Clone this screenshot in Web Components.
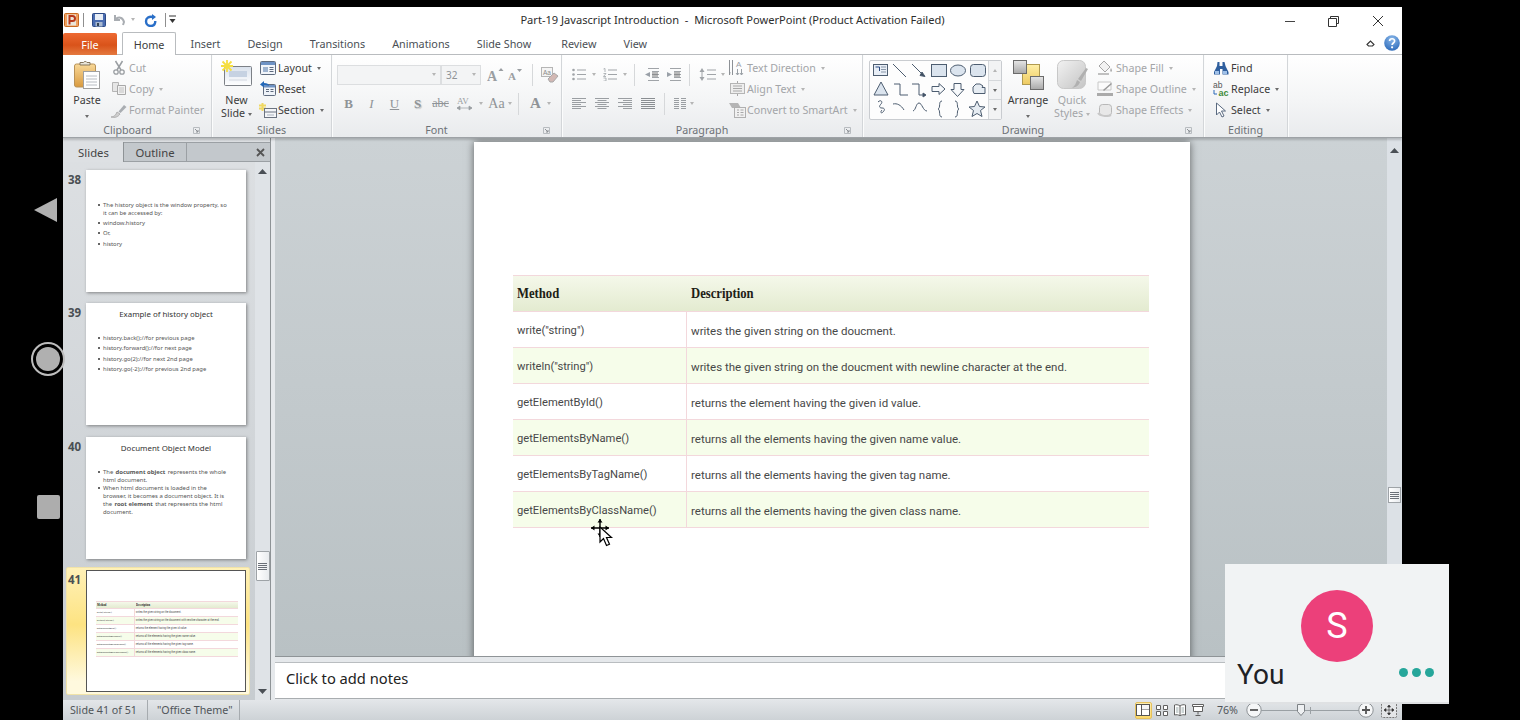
<!DOCTYPE html>
<html>
<head>
<meta charset="utf-8">
<title>PowerPoint</title>
<style>
  html, body { margin: 0; padding: 0; background: #000; height: 720px; overflow: hidden; }
</style>
</head>
<body>
<ppt-app></ppt-app>
<script>
const s = (w, h, inner) => `<svg xmlns="http://www.w3.org/2000/svg" width="${w}" height="${h}" viewBox="0 0 ${w} ${h}">${inner}</svg>`;
const grey = '#9a9ea2';
const ICONS = {
  ppt: s(15, 14, `<rect x=".5" y=".5" width="14" height="13" rx="1" fill="#f0a060" stroke="#c8691f"/><rect x="3" y="1.5" width="9" height="11" fill="#e9e4d8"/><path d="M5.5 11.5V3h3a2.4 2.4 0 0 1 0 5h-3" fill="none" stroke="#b8381a" stroke-width="2"/>`),
  save: s(14, 14, `<rect x=".5" y=".5" width="13" height="13" rx="1" fill="#4a6cb0" stroke="#2c4a86"/><rect x="3" y="1" width="8" height="6" fill="#e8eef6"/><rect x="3.5" y="9" width="7" height="4.5" fill="#a8b8d0"/><rect x="5" y="10" width="2" height="3" fill="#345"/>`),
  undo: s(13, 13, `<path d="M2 2v5h5M2.5 6.5C5 3.5 10 4 11 9l-1 3" fill="none" stroke="#a9adb2" stroke-width="2"/>`),
  redo: s(13, 14, `<path d="M8 1l4 3-4 3z" fill="#2a6fc8"/><path d="M9 4C5 3 2 5 2 8.200 2 11 4.200 13 6.800 13 9.600 13 11.300 11 11.300 8" fill="none" stroke="#2a6fc8" stroke-width="2.400"/>`),
  customize: s(7, 9, `<path d="M0 1h7" stroke="#333"/><path d="M.5 4h6L3.5 8z" fill="#333"/>`),
  min: s(15, 3, `<path d="M1 1.5h10" stroke="#444" stroke-width="1"/>`),
  restore: s(11, 11, `<path d="M2.5 2.5V.5h8v7H8.500M.5 2.500h8v8h-8z" fill="none" stroke="#333"/>`),
  close: s(12, 12, `<path d="M1 1l10 10M11 1L1 11" stroke="#333" stroke-width="1"/>`),
  chevup: s(9, 7, `<path d="M1 4.500L4.500 1 8 4.500 6.500 6h-4z" fill="none" stroke="#333" stroke-width="1.100"/>`),
  help: s(16, 16, `<defs><radialGradient id="h" cx=".5" cy=".25" r=".8"><stop offset="0" stop-color="#8ab8ea"/><stop offset="1" stop-color="#2a68b8"/></radialGradient></defs><circle cx="8" cy="8" r="7.800" fill="url(#h)"/><path d="M5.600 6c0-3 5-3 5 0 0 2-2.500 2-2.500 4" fill="none" stroke="#fff" stroke-width="1.700"/><circle cx="8.100" cy="12.300" r="1.100" fill="#fff"/>`),
  paste: s(27, 29, `<defs><linearGradient id="p" x1="0" y1="0" x2="0" y2="1"><stop offset="0" stop-color="#f8d898"/><stop offset="1" stop-color="#d99a3f"/></linearGradient></defs><rect x=".5" y="4" width="21" height="23" rx="2" fill="url(#p)" stroke="#b89258"/><path d="M6 5V2.500h3.500a2 2 0 0 1 3.500 0H16V5z" fill="#e9e5da" stroke="#85765c"/><rect x="9.500" y="11.500" width="16" height="17" fill="#fff" stroke="#a0a0a0"/><path d="M12 16h11M12 19h11M12 22h11M12 25h11" stroke="#b8bcc2"/>`),
  cut: s(12, 15, `<path d="M2.500 1l5.500 9M9.500 1L4 10" stroke="${grey}" stroke-width="1.500"/><circle cx="3" cy="12" r="2.200" fill="none" stroke="${grey}" stroke-width="1.300"/><circle cx="9" cy="12" r="2.200" fill="none" stroke="${grey}" stroke-width="1.300"/>`),
  copy: s(14, 13, `<path d="M.5 .5h6v9h-6z" fill="#e6e6e6" stroke="#b5b5b5"/><path d="M5.500 3.500h8v9h-8z" fill="#f2f2f2" stroke="#a8a8a8"/><path d="M7 6h5M7 8h5M7 10h5" stroke="#c0c0c0"/>`),
  painter: s(18, 15, `<path d="M1 14c3 0 5-2 6-5l3 2c-2 3-5 4-9 3z" fill="#cfcfcf" stroke="#b0b0b0"/><path d="M8.500 8.500L14 2l2.500 2-6 6z" fill="#a9adb2"/>`),
  newslide: s(32, 27, `<defs><linearGradient id="n" x1="0" y1="0" x2="0" y2="1"><stop offset="0" stop-color="#d9e1ec"/><stop offset="1" stop-color="#fff"/></linearGradient></defs><rect x="3.500" y="6.500" width="27" height="19" rx="1" fill="url(#n)" stroke="#7c8086"/><path d="M8 11h18v6H8z" fill="#c6d2e2"/><path d="M8 20h18" stroke="#d3d8df"/><path d="M6 0v12M0 6h12M1.500 1.500l9 9M10.500 1.500l-9 9" stroke="#f5de40" stroke-width="1.800"/>`),
  layout: s(16, 14, `<rect x=".5" y=".5" width="15" height="13" rx="1" fill="#f2f5fa" stroke="#5f6b7e"/><rect x="1" y="1" width="14" height="3" fill="#6f93c5"/><path d="M3 6h5v5H3z" fill="#9fb4d0"/><path d="M9.500 6.500h4M9.500 8.500h4M9.500 10.500h4" stroke="#5f6b7e"/>`),
  reset: s(16, 15, `<rect x="3.500" y="3.500" width="12" height="11" rx="1" fill="#eef2f8" stroke="#5f6b7e"/><rect x="4" y="4" width="11" height="2.500" fill="#6f93c5"/><path d="M6 8.500h3M6 10.500h3M10.500 8.500h3M10.500 10.500h3" stroke="#5f6b7e"/><path d="M0 3.500L4 0v2c3 0 5 1 5 3-1-1-3-1-5-1v2.500z" fill="#2468b8"/>`),
  section: s(18, 15, `<path d="M0 2.500h7M0 5.500h7M3.500 0v8" stroke="#f0d860" stroke-width="2"/><rect x="5.500" y="5.500" width="12" height="9" fill="#f4f6f9" stroke="#6b7380"/><path d="M5.500 9h12" stroke="#6b7380"/><path d="M8 12h7" stroke="#aab2bd"/>`),
  grow: s(18, 16, `<text x="0" y="14" font-family="Liberation Serif" font-weight="700" font-size="14" fill="${grey}">A</text><path d="M11.500 4l2.500-3 2.500 3z" fill="${grey}"/>`),
  shrink: s(15, 14, `<text x="0" y="12" font-family="Liberation Serif" font-weight="700" font-size="11" fill="${grey}">A</text><path d="M9 1h5l-2.500 3z" fill="${grey}"/>`),
  clear: s(18, 16, `<rect x=".5" y=".5" width="11" height="9" fill="#f4f4f4" stroke="#b5b5b5"/><text x="2" y="7.500" font-family="Liberation Sans" font-size="6.500" fill="#8a8a8a">Aa</text><path d="M7 12l6-6 4 3-5 6H9z" fill="#d2b8b4" stroke="#a8a8a8"/>`),
  spacing: s(22, 15, `<text x="1" y="8" font-family="Liberation Serif" font-size="9" fill="${grey}">AV</text><path d="M1 12h15M1 12l3-2v4zM16 12l-3-2v4z" stroke="${grey}" fill="${grey}" stroke-width=".7"/>`),
  bullets: s(14, 13, `<circle cx="1.500" cy="2" r="1.300" fill="#a0a4a8"/><circle cx="1.500" cy="6.500" r="1.300" fill="#a0a4a8"/><circle cx="1.500" cy="11" r="1.300" fill="#a0a4a8"/><path d="M5 2h9M5 6.500h9M5 11h9" stroke="#a0a4a8"/>`),
  numbers: s(14, 13, `<path d="M.5 1l1.500-.5V4M.5 5.500h2.500L.500 8.500h2.500M.5 10h2.500v3h-2.500" fill="none" stroke="#a0a4a8" stroke-width=".8"/><path d="M5 2h9M5 6.500h9M5 11h9" stroke="#a0a4a8"/>`),
  outdent: s(15, 13, `<path d="M4 .500h11M8 3.500h7M8 6.500h7M8 9.500h7M4 12.500h11" stroke="#a0a4a8"/><path d="M6 4v5L1 6.500z" fill="#9aa0a8"/><rect x="8" y="4" width="6" height="5" fill="#777" opacity=".5"/>`),
  indent: s(15, 13, `<path d="M4 .500h11M8 3.500h7M8 6.500h7M8 9.500h7M4 12.500h11" stroke="#a0a4a8"/><path d="M1 4v5l5-2.500z" fill="#9aa0a8"/><rect x="8" y="4" width="6" height="5" fill="#777" opacity=".5"/>`),
  linesp: s(21, 15, `<path d="M3 1L.5 5h5zM3 14L.5 10h5z" fill="#a0a4a8"/><path d="M3 4v7" stroke="#a0a4a8"/><path d="M8 3h9M8 7.500h9M8 12h9" stroke="#a0a4a8"/>`),
  al: s(14, 11, `<path d="M0 .500h14M0 2.500h9M0 4.500h14M0 6.500h9M0 8.500h14M0 10.500h9" stroke="#9a9ea2"/>`),
  ac: s(14, 11, `<path d="M0 .500h14M2.500 2.500h9M0 4.500h14M2.500 6.500h9M0 8.500h14M2.500 10.500h9" stroke="#9a9ea2"/>`),
  ar: s(14, 11, `<path d="M0 .500h14M5 2.500h9M0 4.500h14M5 6.500h9M0 8.500h14M5 10.500h9" stroke="#9a9ea2"/>`),
  aj: s(14, 11, `<path d="M0 .500h14M0 2.500h14M0 4.500h14M0 6.500h14M0 8.500h14M0 10.500h14" stroke="#8a8e92"/>`),
  cols: s(12, 11, `<path d="M0 .5h5M7 .5h5M0 2.500h5M7 2.500h5M0 4.500h5M7 4.500h5M0 6.500h5M7 6.500h5M0 8.500h5M7 8.500h5M0 10.500h5M7 10.500h5" stroke="#9a9ea2"/>`),
  textdir: s(16, 17, `<path d="M.5 1v15M3.500 1v15M1 13l-.5 3-.5-3" stroke="#8d9196"/><text x="7" y="7.500" font-family="Liberation Sans" font-size="8" fill="#9aa0a6">A</text><path d="M8.500 10v6M12.500 10v6M7 14l1.500 2 1.500-2M11 14l1.500 2 1.500-2" fill="none" stroke="#9aa0a6"/>`),
  aligntext: s(15, 15, `<rect x=".5" y="2.500" width="14" height="10" fill="#eee" stroke="#b5b5b5"/><path d="M3 5h9M3 7.500h9M3 10h9" stroke="#a8a8a8"/><path d="M7.500 0v2M7.500 13v2" stroke="#a8a8a8"/>`),
  smartart: s(18, 16, `<path d="M1 1h9l3 5H4z" fill="#b5b5b5"/><rect x="6.500" y="5.500" width="11" height="10" fill="#f1f1f1" stroke="#b0b0b0"/><path d="M9 8h2M9 10.500h2M9 13h2M12.500 8h3M12.500 10.500h3M12.500 13h3" stroke="#a8a8a8"/>`),
  shapes: s(118, 58, `<g fill="none" stroke="#4d5d70" stroke-width="1"><rect x="3.500" y="3.500" width="14" height="11" fill="#e8eef6"/><path d="M5.500 6h4v4" stroke="#2a4a80"/><path d="M11 6h5M11 8.500h5M11 11h5" stroke="#8896a8"/><path d="M23 3l13 13M42 3l11 11"/><path d="M52 11l3 4.500-5-1z" fill="#3c4c5e"/><rect x="61.500" y="3.500" width="15" height="12" fill="#dbe4ee"/><ellipse cx="88" cy="9.500" rx="7.500" ry="5.500" fill="#dbe4ee"/><rect x="100.500" y="3.500" width="15" height="12" rx="3" fill="#dbe4ee"/><path d="M11 21l7 13H4z" fill="#dbe4ee"/><path d="M24 23h6v11h8M42 23h7v11h6"/><path d="M53 32l3 2-3 2z" fill="#3c4c5e"/><path d="M62 25.500h7v-3l6 5.500-6 5.500v-3h-7zM84 22.500h7v6h3l-6.500 7-6.500-7h3z" fill="#f7f9fb"/><path d="M103 30v-4l3-3h4l3 2-1 1.500h3v6h-11z" fill="#e6ecf2"/><path d="M8 41c3-3 5 0 3 2s-2 4 1 4 3 2 1 4-3 0-1-2"/><path d="M23 43c4-1 8 1 11 6M43 50c3-1 3-8 6-8s4 8 8 8"/><path d="M72 40c-4 0-1 7-4 8 3 1 0 8 4 8M85 40c4 0 1 7 4 8-3 1 0 8-4 8"/><path d="M107 40l2.500 5.500 5.500.5-4.500 3.500 1.500 6-5-3-5 3 1.500-6-4.500-3.500 5.500-.5z" fill="#e6ecf2"/></g>`),
  arrange: s(31, 30, `<defs><linearGradient id="a" x1="0" y1="0" x2="0" y2="1"><stop offset="0" stop-color="#fff0a8"/><stop offset="1" stop-color="#eeca60"/></linearGradient><linearGradient id="g" x1="0" y1="0" x2="0" y2="1"><stop offset="0" stop-color="#e6e6e6"/><stop offset="1" stop-color="#a8a8a8"/></linearGradient></defs><rect x="9.500" y="4.500" width="17" height="20" fill="url(#a)" stroke="#b09a50"/><rect x=".5" y=".5" width="13" height="13" fill="url(#g)" stroke="#6b6b6b"/><rect x="17.500" y="16.500" width="13" height="13" fill="url(#g)" stroke="#6b6b6b"/>`),
  quick: s(31, 30, `<defs><linearGradient id="q" x1="0" y1="0" x2="1" y2="1"><stop offset="0" stop-color="#f2f2f2"/><stop offset="1" stop-color="#c4c4c4"/></linearGradient></defs><rect x=".5" y=".5" width="28" height="28" rx="6" fill="url(#q)" stroke="#c8c8c8"/><path d="M15 28c3-2 4-5 5-8l3 2c-1 3-3 5-8 6zM21 19l8-11 2 1-7 12z" fill="#b0b0b0"/>`),
  fill: s(16, 15, `<path d="M7 1l6 6-5 5-6-6z" fill="#f2f2f2" stroke="#a5a5a5"/><path d="M1 13h11v2H1z" fill="#c0c0c0"/><path d="M14 8c1 2 1.500 3 0 4-1-1-1-2 0-4z" fill="#a5a5a5"/>`),
  outline: s(16, 15, `<path d="M1 1h13v8H1z" fill="#fbfbfb" stroke="#c8c8c8"/><path d="M6 9l8-7 1 1-8 7z" fill="#999"/><rect x="0" y="12" width="16" height="3" fill="#aaa"/>`),
  effects: s(16, 14, `<rect x="2.500" y="1.500" width="12" height="11" rx="3" fill="#e8e8e8" stroke="#b8b8b8"/><path d="M1 10c2 3 9 4 13 2" stroke="#c8c8c8" stroke-width="2" fill="none"/>`),
  find: s(16, 14, `<path d="M4.500 1h2v4h3V1h2l1 4 3 6v2.500h-6V8H7v5.500H1V11l3-6z" fill="#2f5f9e"/><rect x="2" y="10" width="4" height="3" fill="#9fc0e8"/><rect x="10" y="10" width="4" height="3" fill="#9fc0e8"/>`),
  replace: s(16, 16, `<text x="0" y="7" font-family="Liberation Sans" font-size="8.500" fill="#555">ab</text><text x="5.500" y="15" font-family="Liberation Sans" font-weight="700" font-size="9" fill="#3f8a3a">ac</text><path d="M1 9v4h3" fill="none" stroke="#2a68b8"/>`),
  select: s(14, 16, `<path d="M2.500 1v12l3-3 2.500 5 2-1-2.500-5h4z" fill="#fff" stroke="#5a6a80"/>`),
  launcher: s(7, 7, `<path d="M.5 .5h6v6h-6z" fill="none" stroke="#b8bcc0"/><path d="M2 2l3 3M5 3v2H3" fill="none" stroke="#8b8f94"/>`),
  xpane: s(9, 9, `<path d="M1 1l7 7M8 1L1 8" stroke="#555" stroke-width="1.800"/>`),
  tri_up: s(9, 5, `<path d="M0 5L4.500 0 9 5z" fill="#4a4f55"/>`),
  tri_dn: s(9, 5, `<path d="M0 0l4.500 5L9 0z" fill="#4a4f55"/>`),
  grip: s(9, 7, `<path d="M0 .5h9M0 2.500h9M0 4.500h9M0 6.500h9" stroke="#6a7078"/>`),
  normal: s(14, 12, `<rect x=".5" y=".5" width="13" height="11" fill="#fff" stroke="#555"/><path d="M5.500 1v10M6 5.500h7" stroke="#555"/><rect x="6" y="1" width="7" height="4.500" fill="#f6f6f6"/>`),
  sorter: s(12, 11, `<path d="M.5 .5h4v4h-4zM7.500 .5h4v4h-4zM.5 6.500h4v4h-4zM7.500 6.500h4v4h-4z" fill="#fff" stroke="#606060"/>`),
  reading: s(12, 12, `<path d="M6 2C4 .5 2 .5 .5 1v10c2-.5 4-.5 5.500 1 1.500-1.500 3.500-1.500 5.500-1V1C10 .5 8 .5 6 2zM6 2v10" fill="#fff" stroke="#606060"/><path d="M2 4h2.500M2 6h2.500M2 8h2.500M7.500 4H10M7.500 6H10M7.500 8H10" stroke="#9aa"/>`),
  show: s(12, 12, `<path d="M.5 .5h11v2h-11zM1.500 2.500h9v5h-9z" fill="#fff" stroke="#606060"/><path d="M6 7.500v3M3.500 11.500h5" stroke="#606060"/>`),
  fit: s(16, 16, `<rect x=".5" y=".5" width="15" height="15" rx="1" fill="#e4e6e8" stroke="#777" stroke-dasharray="2 1"/><path d="M8 3v10M3 8h10M8 3L6.500 5h3zM8 13l-1.500-2h3zM3 8l2-1.500v3zM13 8l-2-1.500v3z" fill="#333" stroke="#333" stroke-width=".6"/>`),
  zoomin: s(16, 16, `<circle cx="8" cy="8" r="7.200" fill="#f5f6f7" stroke="#8d9296"/><path d="M4 8h8M8 4v8" stroke="#555" stroke-width="1.800"/>`),
  zoomout: s(16, 16, `<circle cx="8" cy="8" r="7.200" fill="#f5f6f7" stroke="#8d9296"/><path d="M4 8h8" stroke="#555" stroke-width="1.800"/>`),
  zthumb: s(8, 12, `<path d="M.5 .5h7v7L4 11.500.5 7.500z" fill="#eef0f2" stroke="#7c8185"/>`),
  cursor: s(26, 30, `<path d="M9 0v18M0 9h18" stroke="#000" stroke-width="1.400"/><path d="M9 0L6.500 3.500h5zM9 18l-2.500-3.500h5zM0 9l3.500-2.500v5zM18 9l-3.500-2.500v5z" fill="#000"/><path d="M9 8v15l3.500-3.500 3 7 3-1.300-3-6.700h5z" fill="#fff" stroke="#000" stroke-width="1.200"/>`)
};

class RbIcon extends HTMLElement {
  connectedCallback() {
    if (this.shadowRoot) return;
    const root = this.attachShadow({ mode: "open" });
    root.innerHTML = `<style>:host{display:inline-flex;line-height:0;flex:none}</style>${ICONS[this.getAttribute("name")] || ""}`;
  }
}
customElements.define("rb-icon", RbIcon);

class RbBtn extends HTMLElement {
  constructor() {
    super();
    this.attachShadow({ mode: "open" }).innerHTML = `
      <style>
        :host { display: flex; align-items: center; height: 21.800px; white-space: nowrap; font-size: 10.700px; color: #3c3c3c; }
        :host([muted]) { color: #a3a5a8; }
        .ico { display: inline-flex; justify-content: center; width: var(--ico, 17px); margin-right: 2px; }
        .caret { display: none; width: 0; height: 0; margin-left: 5px; margin-top: 1px; border: 2.5px solid transparent; border-top: 3px solid #6c6c6c; border-bottom: 0; }
        :host([caret]) .caret { display: inline-block; }
        :host([muted]) .caret { border-top-color: #b5b5b5; }
      </style>
      <span class="ico"><slot name="icon"></slot></span><slot></slot><span class="caret"></span>`;
  }
}
customElements.define("rb-btn", RbBtn);

class RbBig extends HTMLElement {
  constructor() {
    super();
    this.attachShadow({ mode: "open" }).innerHTML = `
      <style>
        :host { display: flex; flex-direction: column; align-items: center; font-size: 10.700px; line-height: 13px; color: #3c3c3c; text-align: center; white-space: nowrap; }
        :host([muted]) { color: #a3a5a8; }
        .ico { height: 37px; flex: none; display: flex; align-items: flex-end; padding-bottom: 5px; box-sizing: border-box; }
      </style>
      <div class="ico"><slot name="icon"></slot></div><div><slot></slot></div>`;
  }
}
customElements.define("rb-big", RbBig);

class RbCaret extends HTMLElement {
  constructor() {
    super();
    this.attachShadow({ mode: "open" }).innerHTML = `<style>:host{display:inline-block;width:0;height:0;border:2.5px solid transparent;border-top:3px solid #6c6c6c;border-bottom:0;vertical-align:middle}:host([muted]){border-top-color:#b5b5b5}</style>`;
  }
}
customElements.define("rb-caret", RbCaret);

class RbGroup extends HTMLElement {
  constructor() {
    super();
    this.attachShadow({ mode: "open" }).innerHTML = `
      <style>
        :host { display: flex; flex-direction: column; flex: none; box-sizing: border-box; height: 82px; border-right: 1px solid #d3d6d9; box-shadow: 1px 0 0 #fbfcfc; }
        .body { height: 66px; padding-top: 2px; box-sizing: border-box; display: flex; }
        .label { display: flex; height: 16px; padding-top: 2px; box-sizing: border-box; align-items: center; font-size: 10.700px; color: #6d7176; }
        .label span { flex: 1; text-align: center; }
        .launch { width: 20px; display: none; justify-content: flex-start; padding-left: 2px; box-sizing: border-box; }
        :host([launcher]) .launch { display: flex; }
      </style>
      <div class="body"><slot></slot></div>
      <div class="label"><span id="t"></span><div class="launch"><rb-icon name="launcher"></rb-icon></div></div>`;
  }
  connectedCallback() { this.shadowRoot.getElementById("t").textContent = this.getAttribute("label"); }
}
customElements.define("rb-group", RbGroup);

class TitleBar extends HTMLElement {
  constructor() {
    super();
    this.attachShadow({ mode: "open" }).innerHTML = `
      <style>
        :host { display: grid; grid-template-columns: 1fr auto 1fr; align-items: center; height: 25px; background: #fff; font-size: 11.100px; color: #2d2d2d; flex: none; }
        .qat { display: flex; align-items: center; padding-left: 1px; }
        .sep { width: 1px; height: 14px; background: #8f8f8f; }
        .win { display: flex; justify-content: flex-end; align-items: center; padding: 3px 18px 0 0; }
      </style>
      <div class="qat">
        <rb-icon name="ppt"></rb-icon>
        <span class="sep" style="margin:0 8px 0 4px"></span>
        <rb-icon name="save"></rb-icon>
        <rb-icon name="undo" style="margin-left:7px"></rb-icon>
        <rb-caret muted style="margin-left:5px"></rb-caret>
        <rb-icon name="redo" style="margin-left:9px"></rb-icon>
        <span class="sep" style="margin-left:8px"></span>
        <rb-icon name="customize" style="margin-left:3px"></rb-icon>
      </div>
      <div class="ttl">Part-19 Javascript Introduction &nbsp;-&nbsp; Microsoft PowerPoint (Product Activation Failed)</div>
      <div class="win">
        <rb-icon name="min"></rb-icon>
        <rb-icon name="restore" style="margin-left:29px"></rb-icon>
        <rb-icon name="close" style="margin-left:33px"></rb-icon>
      </div>`;
  }
}
customElements.define("title-bar", TitleBar);

class RibbonTabs extends HTMLElement {
  constructor() {
    super();
    const tabs = ["Insert", "Design", "Transitions", "Animations", "Slide Show", "Review", "View"];
    this.attachShadow({ mode: "open" }).innerHTML = `
      <style>
        :host { display: flex; height: 23px; background: #fff; font-size: 10.800px; color: #4a4f55; flex: none; border-bottom: 1px solid #b9bcbf; box-sizing: border-box; align-items: flex-end; }
        .file { width: 54px; height: 22px; margin-bottom: -1px; box-sizing: border-box; display: flex; align-items: center; justify-content: center; color: #fff; background: linear-gradient(#ee6a33, #d9531a 55%, #e4793f); border-radius: 2px 2px 0 0; }
        .home { width: 54px; margin-left: 5px; height: 23px; margin-bottom: -1px; box-sizing: border-box; display: flex; align-items: center; justify-content: center; background: #fff; border: 1px solid #b9bcbf; border-bottom: 0; border-radius: 2px 2px 0 0; color: #3c3c3c; }
        .tab { padding: 0 13.500px; height: 22px; display: flex; align-items: center; white-space: nowrap; }
        .first { margin-left: 1px; }
        .review { margin-left: 3px; }
        .end { margin-left: auto; display: flex; align-items: center; height: 22px; padding-right: 2px; }
      </style>
      <div class="file">File</div>
      <div class="home">Home</div>
      ${tabs.map((t, i) => `<div class="tab ${i ? (t === "Review" ? "review" : "") : "first"}">${t}</div>`).join("")}
      <div class="end"><rb-icon name="chevup"></rb-icon><rb-icon name="help" style="margin-left:9px"></rb-icon></div>`;
  }
}
customElements.define("ribbon-tabs", RibbonTabs);

class RibbonBar extends HTMLElement {
  constructor() {
    super();
    const i = (n, st = "") => `<rb-icon name="${n}" style="${st}"></rb-icon>`;
    const big = (n, st = "") => `<rb-icon slot="icon" name="${n}" style="${st}"></rb-icon>`;
    const btn = (n, t, attrs = "") => `<rb-btn ${attrs}><rb-icon slot="icon" name="${n}"></rb-icon>${t}</rb-btn>`;
    this.attachShadow({ mode: "open" }).innerHTML = `
      <style>
        :host { display: flex; height: 83px; flex: none; padding-left: 1px; box-sizing: border-box; background: linear-gradient(#fff, #f4f5f6 55%, #e9ebed 100%); border-bottom: 1px solid #9ea2a6; box-shadow: 0 2px 2px rgba(0,0,0,.18); position: relative; z-index: 2; font-family: inherit; }
        .col { display: flex; flex-direction: column; }
        .rows { display: flex; flex-direction: column; gap: 8px; padding-top: 7px; }
        .row { display: flex; align-items: center; height: 21px; }
        .vsep { width: 1px; height: 22px; background: #d6d8da; }
        .g { font-family: "Liberation Serif", serif; font-size: 13px; color: #8f9397; width: 23px; text-align: center; flex: none; }
        .combo { height: 20px; box-sizing: border-box; border: 1px solid #dcdee0; background: #f3f4f5; display: flex; align-items: center; justify-content: flex-end; padding-right: 4px; font-size: 10px; color: #8f9397; }
        .gallery { display: flex; height: 60px; margin: 3px 0 0 6px; border: 1px solid #c9ccd0; background: #fdfdfd; border-radius: 2px; box-sizing: border-box; }
        .gbtns { display: flex; flex-direction: column; width: 12px; border-left: 1px solid #d5d8db; background: #f2f3f4; }
        .gbtns div { flex: 1; display: flex; align-items: center; justify-content: center; border-bottom: 1px solid #d5d8db; }
        .gbtns div:last-child { border-bottom: 0; }
      </style>
      <rb-group label="Clipboard" launcher style="width:148px">
        <rb-big style="margin-left:7px;width:32px">${big("paste")}Paste<br><rb-caret style="margin-top:4px"></rb-caret></rb-big>
        <div class="col" style="margin-left:7px">
          ${btn("cut", "Cut", "muted")}${btn("copy", "Copy", "muted caret")}${btn("painter", "Format Painter", "muted")}
        </div>
      </rb-group>
      <rb-group label="Slides" style="width:120px">
        <rb-big style="margin-left:8px;width:33px">${big("newslide", "margin-bottom:2px")}New<br>Slide <rb-caret></rb-caret></rb-big>
        <div class="col" style="margin-left:6px">
          ${btn("layout", "Layout", "caret")}${btn("reset", "Reset")}${btn("section", "Section", "caret")}
        </div>
      </rb-group>
      <rb-group label="Font" launcher style="width:230px">
        <div class="rows" style="padding-left:5px">
          <div class="row">
            <div class="combo" style="width:104px"><rb-caret muted></rb-caret></div>
            <div class="combo" style="width:40px;justify-content:space-between;padding-left:4px">32 <rb-caret muted></rb-caret></div>
            ${i("grow", "margin-left:6px")}${i("shrink", "margin-left:3px")}
            <span class="vsep" style="margin-left:9px"></span>
            ${i("clear", "margin-left:8px")}
          </div>
          <div class="row">
            <span class="g" style="font-weight:700;margin-left:0">B</span>
            <span class="g" style="font-style:italic">I</span>
            <span class="g" style="text-decoration:underline;font-family:'Liberation Serif',serif">U</span>
            <span class="g" style="font-weight:700;text-shadow:1px 1px 1px #bbb">S</span>
            <span class="g" style="text-decoration:line-through;font-size:12px">abc</span>
            ${i("spacing", "margin-left:4px")}<rb-caret muted style="margin-left:1px"></rb-caret>
            <span class="g" style="font-size:14px;margin-left:2px">Aa</span><rb-caret muted></rb-caret>
            <span class="vsep" style="margin-left:6px"></span>
            <span class="g" style="font-size:15px;font-weight:700;margin-left:5px">A</span><rb-caret muted></rb-caret>
          </div>
        </div>
      </rb-group>
      <rb-group label="Paragraph" launcher style="width:301px">
        <div class="rows" style="padding-left:10px;width:167px;box-sizing:border-box;flex:none">
          <div class="row">
            ${i("bullets")}<rb-caret muted style="margin-left:6px"></rb-caret>
            ${i("numbers", "margin-left:7px")}<rb-caret muted style="margin-left:6px"></rb-caret>
            <span class="vsep" style="margin:0 9px 0 7px"></span>
            ${i("outdent")}${i("indent", "margin-left:7px")}
            <span class="vsep" style="margin:0 9px 0 8px"></span>
            ${i("linesp")}<rb-caret muted style="margin-left:1px"></rb-caret>
          </div>
          <div class="row">
            ${i("al")}${i("ac", "margin-left:9px")}${i("ar", "margin-left:9px")}${i("aj", "margin-left:9px")}
            <span class="vsep" style="margin:0 9px"></span>
            ${i("cols")}<rb-caret muted style="margin-left:4px"></rb-caret>
          </div>
        </div>
        <div class="col" style="--ico:16px">
          ${btn("textdir", "Text Direction", "muted caret")}${btn("aligntext", "Align Text", "muted caret")}${btn("smartart", "Convert to SmartArt", "muted caret")}
        </div>
      </rb-group>
      <rb-group label="Drawing" launcher style="width:341px">
        <div class="gallery">
          <div style="width:118px;display:flex;align-items:center;justify-content:center">${i("shapes")}</div>
          <div class="gbtns"><div><rb-caret muted style="transform:rotate(180deg)"></rb-caret></div><div><rb-caret></rb-caret></div><div><rb-caret></rb-caret></div></div>
        </div>
        <rb-big style="margin-left:1px;width:50px">${big("arrange", "margin-bottom:-1px")}Arrange<br><rb-caret style="margin-top:4px"></rb-caret></rb-big>
        <rb-big muted style="margin-left:-1px;width:40px">${big("quick", "margin-bottom:-1px")}Quick<br>Styles <rb-caret muted></rb-caret></rb-big>
        <div class="col" style="margin-left:4px;--ico:18px">
          ${btn("fill", "Shape Fill", "muted caret")}${btn("outline", "Shape Outline", "muted caret")}${btn("effects", "Shape Effects", "muted caret")}
        </div>
      </rb-group>
      <rb-group label="Editing" style="width:84px">
        <div class="col" style="margin-left:8px">
          ${btn("find", "Find")}${btn("replace", "Replace", "caret")}${btn("select", "Select", "caret")}
        </div>
      </rb-group>`;
  }
}
customElements.define("ribbon-bar", RibbonBar);

class MethodTable extends HTMLElement {
  constructor() {
    super();
    const rows = [
      ['write("string")', "writes the given string on the doucment."],
      ['writeln("string")', "writes the given string on the doucment with newline character at the end."],
      ["getElementById()", "returns the element having the given id value."],
      ["getElementsByName()", "returns all the elements having the given name value."],
      ["getElementsByTagName()", "returns all the elements having the given tag name."],
      ["getElementsByClassName()", "returns all the elements having the given class name."]
    ];
    this.attachShadow({ mode: "open" }).innerHTML = `
      <style>
        :host { display: block; width: 636px; font-family: Roboto, sans-serif; font-size: 11.500px; color: #484848; }
        .row { display: grid; grid-template-columns: 174px 1fr; height: 36px; box-sizing: border-box; border-bottom: 1px solid #f3d8dc; align-items: stretch; }
        .row > div { display: flex; align-items: center; padding: 2px 0 0 4px; }
        .row > div:first-child { border-right: 1px solid #f3d8dc; font-size: 11.200px; }
        .row:nth-child(even) { background: #f6fdea; }
        .row.head { height: 37px; background: linear-gradient(#f5f8ea, #e3ebd0); border-top: 1px solid #f3d8dc; font-family: "Liberation Serif", serif; font-weight: 700; color: #1d2015; }
        .row.head > div { padding-top: 0; font-size: 15px; }
        .row.head > div:first-child { border-right: 0; padding-right: 1px; }
        .head span { display: inline-block; transform: scaleX(.845); transform-origin: left center; }
      </style>
      <div class="row head"><div><span>Method</span></div><div><span>Description</span></div></div>
      ${rows.map(r => `<div class="row"><div>${r[0]}</div><div>${r[1]}</div></div>`).join("")}`;
  }
}
customElements.define("method-table", MethodTable);

class SlideThumb extends HTMLElement {
  constructor() {
    super();
    this.attachShadow({ mode: "open" }).innerHTML = `
      <style>
        :host { display: flex; flex: none; height: 122px; position: relative; }
        :host([selected])::before { content: ""; position: absolute; left: 3px; right: 5px; top: -3px; bottom: -3px; box-sizing: border-box; border: 1px solid #f1e3a8; border-radius: 2px; background: linear-gradient(#fff1b8, #fde382 45%, #fff9de 90%); }
        .num { width: 23px; padding-left: 5px; box-sizing: border-box; font-weight: 700; font-size: 11.500px; color: #4a4f53; padding-top: 2px; position: relative; }
        .page { width: 160px; height: 122px; background: #fff; box-shadow: 1px 1px 3px rgba(60,60,60,.55); overflow: hidden; position: relative; box-sizing: border-box; color: #555; }
        :host([selected]) .page { border: 1px solid #555; box-shadow: none; }
      </style>
      <div class="num" id="n"></div>
      <div class="page"><slot></slot></div>`;
  }
  connectedCallback() { this.shadowRoot.getElementById("n").textContent = this.getAttribute("num"); }
}
customElements.define("slide-thumb", SlideThumb);

class ThumbBody extends HTMLElement {
  constructor() {
    super();
    this.attachShadow({ mode: "open" }).innerHTML = `
      <style>
        :host { display: block; }
        h4 { margin: 0; padding-top: 6px; height: 20px; box-sizing: border-box; text-align: center; font-weight: 400; font-size: 7.900px; line-height: 10px; color: #333; }
        .b { padding: var(--top, 12px) 8px 0 17px; font-size: 5.900px; line-height: 8px; color: #555; white-space: nowrap; }
      </style>
      <h4 id="h"></h4>
      <div class="b"><slot></slot></div>`;
  }
  connectedCallback() { this.shadowRoot.getElementById("h").textContent = this.getAttribute("heading") || ""; }
}
customElements.define("thumb-body", ThumbBody);

class BulletLine extends HTMLElement {
  constructor() {
    super();
    this.attachShadow({ mode: "open" }).innerHTML = `
      <style>
        :host { display: block; position: relative; margin-bottom: var(--gap, 2.200px); }
        :host::before { content: ""; position: absolute; left: -5px; top: 3px; width: 2px; height: 2px; border-radius: 50%; background: #333; }
        ::slotted(b) { margin: 0 .8px; }
      </style><slot></slot>`;
  }
}
customElements.define("bullet-line", BulletLine);

class ThumbPane extends HTMLElement {
  constructor() {
    super();
    this.attachShadow({ mode: "open" }).innerHTML = `
      <style>
        :host { display: flex; flex-direction: column; width: 208px; flex: none; box-sizing: border-box; background: linear-gradient(#dde0e3, #c7ccd0); border-right: 1px solid #8e9396; position: relative; }
        .tabs { display: flex; height: 24px; flex: none; padding-top: 4px; box-sizing: border-box; font-size: 11.300px; color: #444; }
        .t { display: flex; align-items: center; justify-content: center; height: 20px; box-sizing: border-box; }
        .on { width: 60px; margin-left: 1px; background: #dde0e3; border-right: 1px solid #8e9396; }
        .off { flex: 1; background: #c3c8cc; border-top: 1px solid #9ba0a4; border-bottom: 1px solid #9ba0a4; justify-content: flex-start; }
        .off span { display: flex; align-items: center; justify-content: center; width: 62px; height: 18px; border-right: 1px solid #9ba0a4; }
        .off rb-icon { margin-left: auto; margin-right: 5px; }
        .body { flex: 1; display: flex; min-height: 0; }
        .list { width: 192px; flex: none; display: flex; flex-direction: column; gap: 11.300px; padding-top: 8px; overflow: hidden; box-sizing: border-box; }
        .bar { width: 15px; flex: none; background: #dfe3e7; display: flex; flex-direction: column; align-items: center; padding-top: 7px; box-sizing: border-box; }
        .thumb { width: 14px; height: 30px; margin-top: 377px; box-sizing: border-box; background: linear-gradient(90deg, #fff, #e8ebee); border: 1px solid #9ea3a7; display: flex; align-items: center; justify-content: center; border-radius: 1px; }
        .bar .dn { margin-top: auto; margin-bottom: 6px; }
      </style>
      <div class="tabs">
        <div class="t on">Slides</div>
        <div class="t off"><span>Outline</span><rb-icon name="xpane"></rb-icon></div>
      </div>
      <div class="body">
        <div class="list"><slot></slot></div>
        <div class="bar">
          <rb-icon name="tri_up"></rb-icon>
          <div class="thumb"><rb-icon name="grip"></rb-icon></div>
          <rb-icon class="dn" name="tri_dn"></rb-icon>
        </div>
      </div>`;
  }
}
customElements.define("thumb-pane", ThumbPane);

class SlideEditor extends HTMLElement {
  constructor() {
    super();
    this.attachShadow({ mode: "open" }).innerHTML = `
      <style>
        :host { display: flex; flex: none; height: 519px; min-width: 0; }
        .area { flex: 1; padding: 4px 0 0 199px; box-sizing: border-box; overflow: hidden; background: linear-gradient(#ccd2d5, #b9c1c4); border-bottom: 1px solid #8f9497; }
        .slide { width: 716px; height: 560px; background: #fff; box-shadow: 0 0 8px rgba(0,0,0,.55); padding: 133px 0 0 39px; box-sizing: border-box; }
        .bar { width: 15px; flex: none; background: #dce1e6; display: flex; flex-direction: column; align-items: center; padding-top: 10px; box-sizing: border-box; }
        .thumb { width: 13px; height: 16px; margin-top: 334px; background: linear-gradient(90deg, #fff, #e8ebee); border: 1px solid #9ea3a7; box-sizing: border-box; display: flex; align-items: center; justify-content: center; }
      </style>
      <div class="area"><div class="slide"><slot></slot></div></div>
      <div class="bar"><rb-icon name="tri_up"></rb-icon><div class="thumb"><rb-icon name="grip"></rb-icon></div></div>`;
  }
}
customElements.define("slide-editor", SlideEditor);

class NotesPane extends HTMLElement {
  constructor() {
    super();
    this.attachShadow({ mode: "open" }).innerHTML = `
      <style>
        :host { display: flex; flex: 1; padding-top: 5px; background: #e5e8eb; box-sizing: border-box; }
        div { flex: 1; background: #fff; border-top: 1px solid #b9bdc0; padding: 0 0 6px 11px; display: flex; align-items: center; font-size: 14.700px; color: #222; height: 37px; box-sizing: border-box; border-bottom: 1px solid #a9adb0; }
      </style>
      <div><slot></slot></div>`;
  }
}
customElements.define("notes-pane", NotesPane);

class StatusBar extends HTMLElement {
  constructor() {
    super();
    this.attachShadow({ mode: "open" }).innerHTML = `
      <style>
        :host { display: flex; align-items: center; height: 20px; flex: none; background: linear-gradient(#e3e6e9, #cdd2d6); font-size: 10.700px; color: #50555a; position: relative; }
        .cell { height: 20px; display: flex; align-items: center; border-right: 1px solid #a6abaf; box-sizing: border-box; white-space: nowrap; }
        .right { margin-left: auto; display: flex; align-items: center; padding-right: 5px; }
        .on { width: 17px; height: 17px; display: flex; align-items: center; justify-content: center; background: linear-gradient(#fdeeb0, #fbd86a); border: 1px solid #e6c15c; border-radius: 2px; box-sizing: border-box; }
        .line { width: 98px; height: 1px; background: #9aa0a4; margin: 0 -1px; display: flex; align-items: center; padding-left: 36px; box-sizing: border-box; }
        .line i { display: block; width: 1px; height: 7px; background: #9aa0a4; margin-left: 5px; flex: none; }
      </style>
      <div class="cell" style="width:85px;padding-left:7px">Slide 41 of 51</div>
      <div class="cell" style="width:92px;padding-left:9px">"Office Theme"</div>
      <div class="right">
        <span class="on"><rb-icon name="normal"></rb-icon></span>
        <rb-icon name="sorter" style="margin-left:4px"></rb-icon>
        <rb-icon name="reading" style="margin-left:6px"></rb-icon>
        <rb-icon name="show" style="margin-left:6px"></rb-icon>
        <span style="margin:0 8px 0 13px">76%</span>
        <rb-icon name="zoomout"></rb-icon>
        <div class="line"><rb-icon name="zthumb"></rb-icon><i></i></div>
        <rb-icon name="zoomin"></rb-icon>
        <rb-icon name="fit" style="margin-left:7px"></rb-icon>
      </div>`;
  }
}
customElements.define("status-bar", StatusBar);

class AndroidNav extends HTMLElement {
  constructor() {
    super();
    this.attachShadow({ mode: "open" }).innerHTML = `
      <style>
        :host { display: flex; flex-direction: column; align-items: flex-start; width: 63px; flex: none; position: relative; z-index: 3; }
        .back { margin: 198px 0 0 34px; width: 0; height: 0; border-top: 12.500px solid transparent; border-bottom: 12.500px solid transparent; border-right: 23px solid #b0b0b0; }
        .home { margin: 120px 0 0 31px; width: 34px; height: 34px; box-sizing: border-box; border-radius: 50%; border: 2px solid #bdbdbd; background: #000; display: flex; align-items: center; justify-content: center; flex: none; }
        .home i { width: 24px; height: 24px; border-radius: 50%; background: #b0b0b0; display: block; }
        .stop { margin: 119px 0 0 37px; width: 23px; height: 24px; border-radius: 2px; background: #adadad; }
      </style>
      <div class="back"></div><div class="home"><i></i></div><div class="stop"></div>`;
  }
}
customElements.define("android-nav", AndroidNav);

class CallTile extends HTMLElement {
  constructor() {
    super();
    this.attachShadow({ mode: "open" }).innerHTML = `
      <style>
        :host { position: absolute; left: 1225px; top: 564px; width: 224px; height: 140px; box-sizing: border-box; background: #f1f3f4; border-bottom: 2px solid #dfe1e3; font-family: Roboto, sans-serif; z-index: 5; display: flex; flex-direction: column; }
        .av { width: 72px; height: 72px; margin: 26px auto 0; border-radius: 50%; background: #ec407a; color: #fff; font-size: 36px; display: flex; align-items: center; justify-content: center; flex: none; }
        .foot { display: flex; align-items: center; justify-content: space-between; padding: 0 15px 0 12px; margin-top: -4px; height: 34px; }
        .you { font-size: 28px; color: #202124; line-height: 34px; }
        .dots { display: flex; gap: 4px; margin-top: -6px; }
        .dots i { width: 9px; height: 9px; border-radius: 50%; background: #26a69a; display: block; }
      </style>
      <div class="av">S</div>
      <div class="foot"><span class="you">You</span><span class="dots"><i></i><i></i><i></i></span></div>`;
  }
}
customElements.define("call-tile", CallTile);

class PptApp extends HTMLElement {
  constructor() {
    super();
    this.attachShadow({ mode: "open" }).innerHTML = `
      <style>
        :host { display: flex; width: 1520px; height: 720px; background: #000; position: relative; overflow: hidden; font-family: "Noto Sans", sans-serif; }
        .window { width: 1339px; height: 713px; margin-top: 7px; flex: none; display: flex; flex-direction: column; background: #e5e8eb; }
        .main { flex: 1; display: flex; min-height: 0; }
        .split { width: 4px; flex: none; background: #e6e9ec; }
        .work { flex: 1; min-width: 0; display: flex; flex-direction: column; }
        .cursor { position: absolute; left: 591px; top: 519px; z-index: 4; }
        .mini { zoom: .2235; margin: 133px 0 0 40px; }
      </style>
      <android-nav></android-nav>
      <div class="window">
        <title-bar></title-bar>
        <ribbon-tabs></ribbon-tabs>
        <ribbon-bar></ribbon-bar>
        <div class="main">
          <thumb-pane>
            <slide-thumb num="38">
              <thumb-body style="--top:11px">
                <bullet-line>The history object is the window property, so<br>it can be accessed by:</bullet-line>
                <bullet-line>window.history</bullet-line>
                <bullet-line>Or,</bullet-line>
                <bullet-line>history</bullet-line>
              </thumb-body>
            </slide-thumb>
            <slide-thumb num="39">
              <thumb-body heading="Example of history object" style="--top:11px">
                <bullet-line>history.back();//for previous page</bullet-line>
                <bullet-line>history.forward();//for next page</bullet-line>
                <bullet-line>history.go(2);//for next 2nd page</bullet-line>
                <bullet-line>history.go(-2);//for previous 2nd page</bullet-line>
              </thumb-body>
            </slide-thumb>
            <slide-thumb num="40">
              <thumb-body heading="Document Object Model" style="--top:11px;--gap:.7px">
                <bullet-line>The <b>document object</b> represents the whole<br>html document.</bullet-line>
                <bullet-line>When html document is loaded in the<br>browser, it becomes a document object. It is<br>the <b>root element</b> that represents the html<br>document.</bullet-line>
              </thumb-body>
            </slide-thumb>
            <slide-thumb num="41" selected>
              <method-table class="mini"></method-table>
            </slide-thumb>
          </thumb-pane>
          <div class="split"></div>
          <div class="work">
            <slide-editor><method-table></method-table></slide-editor>
            <notes-pane>Click to add notes</notes-pane>
          </div>
        </div>
        <status-bar></status-bar>
      </div>
      <rb-icon class="cursor" name="cursor"></rb-icon>
      <call-tile></call-tile>`;
  }
}
customElements.define("ppt-app", PptApp);
</script>
</body>
</html>
